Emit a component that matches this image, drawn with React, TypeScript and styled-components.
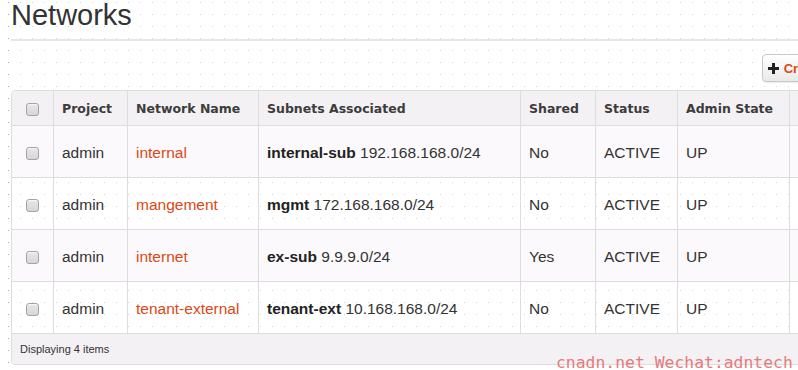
import React from 'react';
import styled, { createGlobalStyle } from 'styled-components';

const GlobalStyle = createGlobalStyle`
  html, body {
    margin: 0;
    padding: 0;
  }
  body {
    width: 798px;
    height: 370px;
    overflow: hidden;
    background-color: #fff;
    background-image:
      conic-gradient(at 1px 1px, transparent 270deg, #a8a8a8 270deg),
      conic-gradient(at 1px 1px, transparent 270deg, #d4d4d4 270deg);
    background-size: 12px 12px, 12px 12px;
    background-position: 8px 2px, 8px 2px;
    background-repeat: repeat-y, repeat;
    font-family: "Liberation Sans", Arial, sans-serif;
    color: #333;
  }
`;

const Page = styled.div`
  position: relative;
  width: 893px;
  height: 370px;
  box-sizing: border-box;
  padding-left: 11px;
`;

const Title = styled.h1`
  margin: 0;
  padding-bottom: 9px;
  border-bottom: 2px solid #e6e6e6;
  font-family: "Liberation Sans", Arial, sans-serif;
  font-weight: normal;
  font-size: 29px;
  line-height: 30px;
  color: #333;
`;

const Toolbar = styled.div`
  display: flex;
  justify-content: flex-end;
  padding-top: 13px;
  margin-bottom: 8px;
`;

const CreateButton = styled.button`
  display: inline-flex;
  align-items: center;
  gap: 5px;
  height: 28px;
  box-sizing: border-box;
  padding: 0 13px 0 5px;
  border: 1px solid #c9c9c9;
  border-radius: 4px;
  background: linear-gradient(#ffffff, #e9e9e9);
  box-shadow: 0 1px 1px rgba(0, 0, 0, 0.08);
  font-family: "Liberation Sans", Arial, sans-serif;
  font-weight: bold;
  font-size: 13px;
  color: #dd4814;
`;

const PlusIcon = () => (
  <svg width="11" height="11" viewBox="0 0 11 11">
    <rect x="4" y="0" width="3" height="11" fill="#222" />
    <rect x="0" y="4" width="11" height="3" fill="#222" />
  </svg>
);

const TableFrame = styled.div`
  width: 882px;
  box-sizing: border-box;
  border: 1px solid #dddddd;
  border-radius: 4px;
  overflow: hidden;
`;

const Table = styled.table`
  width: 100%;
  table-layout: fixed;
  border-collapse: separate;
  border-spacing: 0;
`;

const HeadCell = styled.th<{ $w?: number }>`
  width: ${(p) => (p.$w ? `${p.$w}px` : 'auto')};
  height: 35px;
  box-sizing: border-box;
  padding: 0 8px;
  background: #f4f1f4;
  border-bottom: 1px solid #dddddd;
  font-family: "DejaVu Sans", Verdana, sans-serif;
  font-weight: bold;
  font-size: 12.5px;
  color: #3c3c3c;
  text-align: left;
  vertical-align: middle;
  white-space: nowrap;
  & + & {
    border-left: 1px solid #dddddd;
  }
`;

const Row = styled.tr`
  &:nth-child(odd) td {
    background: #fcf9fc;
  }
`;

const Cell = styled.td`
  height: 52px;
  box-sizing: border-box;
  padding: 3px 8px 0;
  border-bottom: 1px solid #dddddd;
  font-size: 15.5px;
  color: #333;
  vertical-align: middle;
  white-space: nowrap;
  & + & {
    border-left: 1px solid #dddddd;
  }
`;

const CheckCell = styled(Cell)`
  padding: 0;
`;

const CheckHead = styled(HeadCell)`
  padding: 0;
`;

const Checkbox = styled.span`
  display: block;
  width: 13px;
  height: 13px;
  box-sizing: border-box;
  margin: 3px auto 0;
  border: 1px solid #a3a3a3;
  border-radius: 3px;
  background: linear-gradient(#e8e8e8, #d6d6d6);
  box-shadow: inset 0 1px 0 #f6f6f6;
`;

const NetLink = styled.a`
  color: #dd4814;
  text-decoration: none;
`;

const SubnetName = styled.strong`
  color: #222;
`;

const FooterCell = styled.td`
  height: 30px;
  box-sizing: border-box;
  padding: 0 8px;
  background: #f4f1f4;
  font-size: 11px;
  color: #333;
  vertical-align: middle;
`;

const Watermark = styled.div`
  position: absolute;
  left: 556px;
  top: 355px;
  font-family: "DejaVu Sans Mono", "Liberation Mono", monospace;
  font-size: 16.4px;
  line-height: 16px;
  color: #e47b7b;
  white-space: nowrap;
`;

const networks = [
  { project: 'admin', name: 'internal', subnet: 'internal-sub', cidr: '192.168.168.0/24', shared: 'No' },
  { project: 'admin', name: 'mangement', subnet: 'mgmt', cidr: '172.168.168.0/24', shared: 'No' },
  { project: 'admin', name: 'internet', subnet: 'ex-sub', cidr: '9.9.9.0/24', shared: 'Yes' },
  { project: 'admin', name: 'tenant-external', subnet: 'tenant-ext', cidr: '10.168.168.0/24', shared: 'No' },
];

export default function App() {
  return (
    <Page>
      <GlobalStyle />
      <Title>Networks</Title>
      <Toolbar>
        <CreateButton>
          <PlusIcon />
          Create Network
        </CreateButton>
      </Toolbar>
      <TableFrame>
        <Table>
          <thead>
            <tr>
              <CheckHead $w={41}>
                <Checkbox />
              </CheckHead>
              <HeadCell $w={74}>Project</HeadCell>
              <HeadCell $w={131}>Network Name</HeadCell>
              <HeadCell $w={262}>Subnets Associated</HeadCell>
              <HeadCell $w={75}>Shared</HeadCell>
              <HeadCell $w={82}>Status</HeadCell>
              <HeadCell $w={112}>Admin State</HeadCell>
              <HeadCell />
            </tr>
          </thead>
          <tbody>
            {networks.map((n) => (
              <Row key={n.name}>
                <CheckCell>
                  <Checkbox />
                </CheckCell>
                <Cell>{n.project}</Cell>
                <Cell>
                  <NetLink href="#">{n.name}</NetLink>
                </Cell>
                <Cell>
                  <SubnetName>{n.subnet}</SubnetName> {n.cidr}
                </Cell>
                <Cell>{n.shared}</Cell>
                <Cell>ACTIVE</Cell>
                <Cell>UP</Cell>
                <Cell />
              </Row>
            ))}
          </tbody>
          <tfoot>
            <tr>
              <FooterCell colSpan={8}>Displaying 4 items</FooterCell>
            </tr>
          </tfoot>
        </Table>
      </TableFrame>
      <Watermark>cnadn.net Wechat:adntech</Watermark>
    </Page>
  );
}
